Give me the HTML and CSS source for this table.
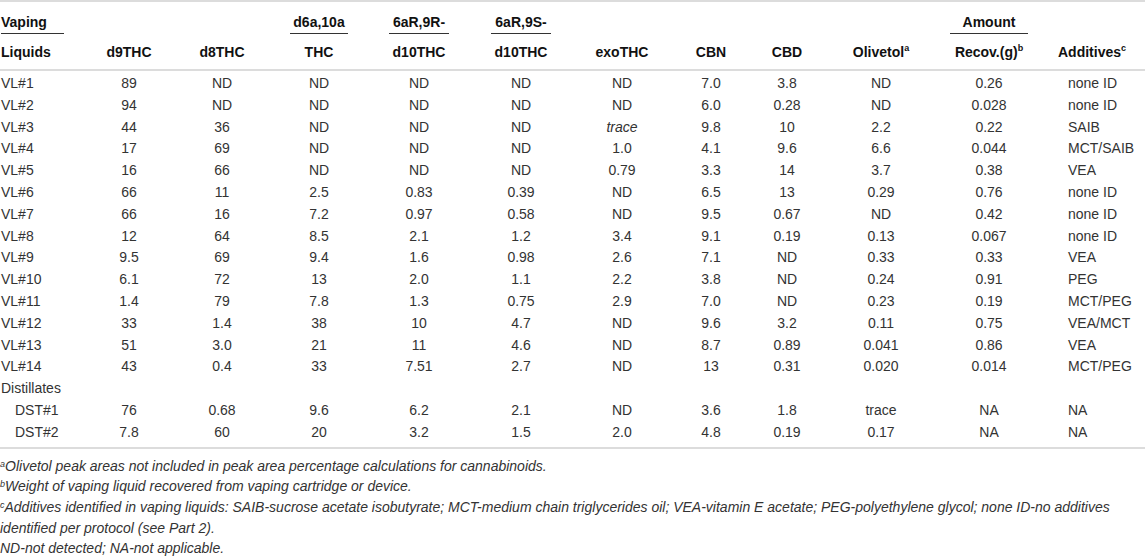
FILE: index.html
```html
<!DOCTYPE html>
<html>
<head>
<meta charset="utf-8">
<link rel="stylesheet" href="styles.css">
</head>
<body>
<table class="tbl">
  <colgroup>
    <col class="c1"><col class="c2"><col class="c3"><col class="c4"><col class="c5"><col class="c6">
    <col class="c7"><col class="c8"><col class="c9"><col class="c10"><col class="c11"><col class="c12">
  </colgroup>
  <thead>
    <tr class="h1">
      <th class="left"><span class="ul u63">Vaping</span></th>
      <th></th><th></th>
      <th><span class="ul u58">d6a,10a</span></th>
      <th><span class="ul u60">6aR,9R-</span></th>
      <th><span class="ul u60">6aR,9S-</span></th>
      <th></th><th></th><th></th><th></th>
      <th><span class="ul u78">Amount</span></th>
      <th></th>
    </tr>
    <tr class="h2">
      <th class="left">Liquids</th>
      <th>d9THC</th>
      <th>d8THC</th>
      <th>THC</th>
      <th>d10THC</th>
      <th>d10THC</th>
      <th>exoTHC</th>
      <th>CBN</th>
      <th>CBD</th>
      <th>Olivetol<sup>a</sup></th>
      <th>Recov.(g)<sup>b</sup></th>
      <th class="addh">Additives<sup>c</sup></th>
    </tr>
  </thead>
  <tbody>
    <tr class="first"><td class="left">VL#1</td><td>89</td><td>ND</td><td>ND</td><td>ND</td><td>ND</td><td>ND</td><td>7.0</td><td>3.8</td><td>ND</td><td>0.26</td><td class="add">none ID</td></tr>
    <tr><td class="left">VL#2</td><td>94</td><td>ND</td><td>ND</td><td>ND</td><td>ND</td><td>ND</td><td>6.0</td><td>0.28</td><td>ND</td><td>0.028</td><td class="add">none ID</td></tr>
    <tr><td class="left">VL#3</td><td>44</td><td>36</td><td>ND</td><td>ND</td><td>ND</td><td><i>trace</i></td><td>9.8</td><td>10</td><td>2.2</td><td>0.22</td><td class="add">SAIB</td></tr>
    <tr><td class="left">VL#4</td><td>17</td><td>69</td><td>ND</td><td>ND</td><td>ND</td><td>1.0</td><td>4.1</td><td>9.6</td><td>6.6</td><td>0.044</td><td class="add">MCT/SAIB</td></tr>
    <tr><td class="left">VL#5</td><td>16</td><td>66</td><td>ND</td><td>ND</td><td>ND</td><td>0.79</td><td>3.3</td><td>14</td><td>3.7</td><td>0.38</td><td class="add">VEA</td></tr>
    <tr><td class="left">VL#6</td><td>66</td><td>11</td><td>2.5</td><td>0.83</td><td>0.39</td><td>ND</td><td>6.5</td><td>13</td><td>0.29</td><td>0.76</td><td class="add">none ID</td></tr>
    <tr><td class="left">VL#7</td><td>66</td><td>16</td><td>7.2</td><td>0.97</td><td>0.58</td><td>ND</td><td>9.5</td><td>0.67</td><td>ND</td><td>0.42</td><td class="add">none ID</td></tr>
    <tr><td class="left">VL#8</td><td>12</td><td>64</td><td>8.5</td><td>2.1</td><td>1.2</td><td>3.4</td><td>9.1</td><td>0.19</td><td>0.13</td><td>0.067</td><td class="add">none ID</td></tr>
    <tr><td class="left">VL#9</td><td>9.5</td><td>69</td><td>9.4</td><td>1.6</td><td>0.98</td><td>2.6</td><td>7.1</td><td>ND</td><td>0.33</td><td>0.33</td><td class="add">VEA</td></tr>
    <tr><td class="left">VL#10</td><td>6.1</td><td>72</td><td>13</td><td>2.0</td><td>1.1</td><td>2.2</td><td>3.8</td><td>ND</td><td>0.24</td><td>0.91</td><td class="add">PEG</td></tr>
    <tr><td class="left">VL#11</td><td>1.4</td><td>79</td><td>7.8</td><td>1.3</td><td>0.75</td><td>2.9</td><td>7.0</td><td>ND</td><td>0.23</td><td>0.19</td><td class="add">MCT/PEG</td></tr>
    <tr><td class="left">VL#12</td><td>33</td><td>1.4</td><td>38</td><td>10</td><td>4.7</td><td>ND</td><td>9.6</td><td>3.2</td><td>0.11</td><td>0.75</td><td class="add">VEA/MCT</td></tr>
    <tr><td class="left">VL#13</td><td>51</td><td>3.0</td><td>21</td><td>11</td><td>4.6</td><td>ND</td><td>8.7</td><td>0.89</td><td>0.041</td><td>0.86</td><td class="add">VEA</td></tr>
    <tr><td class="left">VL#14</td><td>43</td><td>0.4</td><td>33</td><td>7.51</td><td>2.7</td><td>ND</td><td>13</td><td>0.31</td><td>0.020</td><td>0.014</td><td class="add">MCT/PEG</td></tr>
    <tr><td class="left">Distillates</td><td></td><td></td><td></td><td></td><td></td><td></td><td></td><td></td><td></td><td></td><td></td></tr>
    <tr><td class="left ind">DST#1</td><td>76</td><td>0.68</td><td>9.6</td><td>6.2</td><td>2.1</td><td>ND</td><td>3.6</td><td>1.8</td><td>trace</td><td>NA</td><td class="add">NA</td></tr>
    <tr class="last"><td class="left ind">DST#2</td><td>7.8</td><td>60</td><td>20</td><td>3.2</td><td>1.5</td><td>2.0</td><td>4.8</td><td>0.19</td><td>0.17</td><td>NA</td><td class="add">NA</td></tr>
  </tbody>
</table>
<div class="notes">
  <p><sup>a</sup>Olivetol peak areas not included in peak area percentage calculations for cannabinoids.</p>
  <p><sup>b</sup>Weight of vaping liquid recovered from vaping cartridge or device.</p>
  <p><sup>c</sup>Additives identified in vaping liquids: SAIB-sucrose acetate isobutyrate; MCT-medium chain triglycerides oil; VEA-vitamin E acetate; PEG-polyethylene glycol; none ID-no additives identified per protocol (see Part 2).</p>
  <p>ND-not detected; NA-not applicable.</p>
</div>
</body>
</html>
```

FILE: styles.css
```css
html, body {
  margin: 0;
  padding: 0;
  background: #fff;
}
body {
  font-family: "Liberation Sans", Arial, sans-serif;
  color: #333;
  width: 1145px;
  overflow: hidden;
}
.tbl {
  width: 1145px;
  table-layout: fixed;
  border-collapse: collapse;
  font-size: 14px;
  border-top: 2px solid #dcdcdc;
  border-bottom: 2px solid #dcdcdc;
}
.c1 { width: 80px; }
.c2 { width: 98px; }
.c3 { width: 88px; }
.c4 { width: 106px; }
.c5 { width: 94px; }
.c6 { width: 110px; }
.c7 { width: 92px; }
.c8 { width: 86px; }
.c9 { width: 66px; }
.c10 { width: 122px; }
.c11 { width: 94px; }
.c12 { width: 109px; }

th, td {
  padding: 0;
  text-align: center;
  white-space: nowrap;
}
th {
  font-weight: bold;
  color: #111;
  line-height: 22px;
}
.h1 th {
  padding-top: 9px;
  vertical-align: bottom;
}
.h2 th {
  padding-top: 7px;
  padding-bottom: 6px;
}
thead {
  border-bottom: 2px solid #dcdcdc;
}
.ul {
  display: inline-block;
  border-bottom: 1px solid #333;
  line-height: 22px;
}
.u63 { width: 63px; text-align: left; }
.u58 { width: 58px; }
.u60 { width: 60px; }
.u78 { width: 78px; }

.left {
  text-align: left;
  padding-left: 1px;
}
.ind {
  padding-left: 15px;
}
.addh {
  text-align: left;
  padding-left: 22px;
}
.add {
  text-align: left;
  padding-left: 32px;
}
td {
  line-height: 21.8px;
}
.first td {
  padding-top: 2px;
}
.last td {
  padding-bottom: 3px;
}
sup {
  font-size: 9px;
  line-height: 0;
  vertical-align: 6px;
}
.notes sup {
  vertical-align: 4px;
}
.notes {
  margin-top: 7px;
  font-size: 14px;
  font-style: italic;
  line-height: 20.7px;
  color: #333;
}
.notes p {
  margin: 0;
}
```
